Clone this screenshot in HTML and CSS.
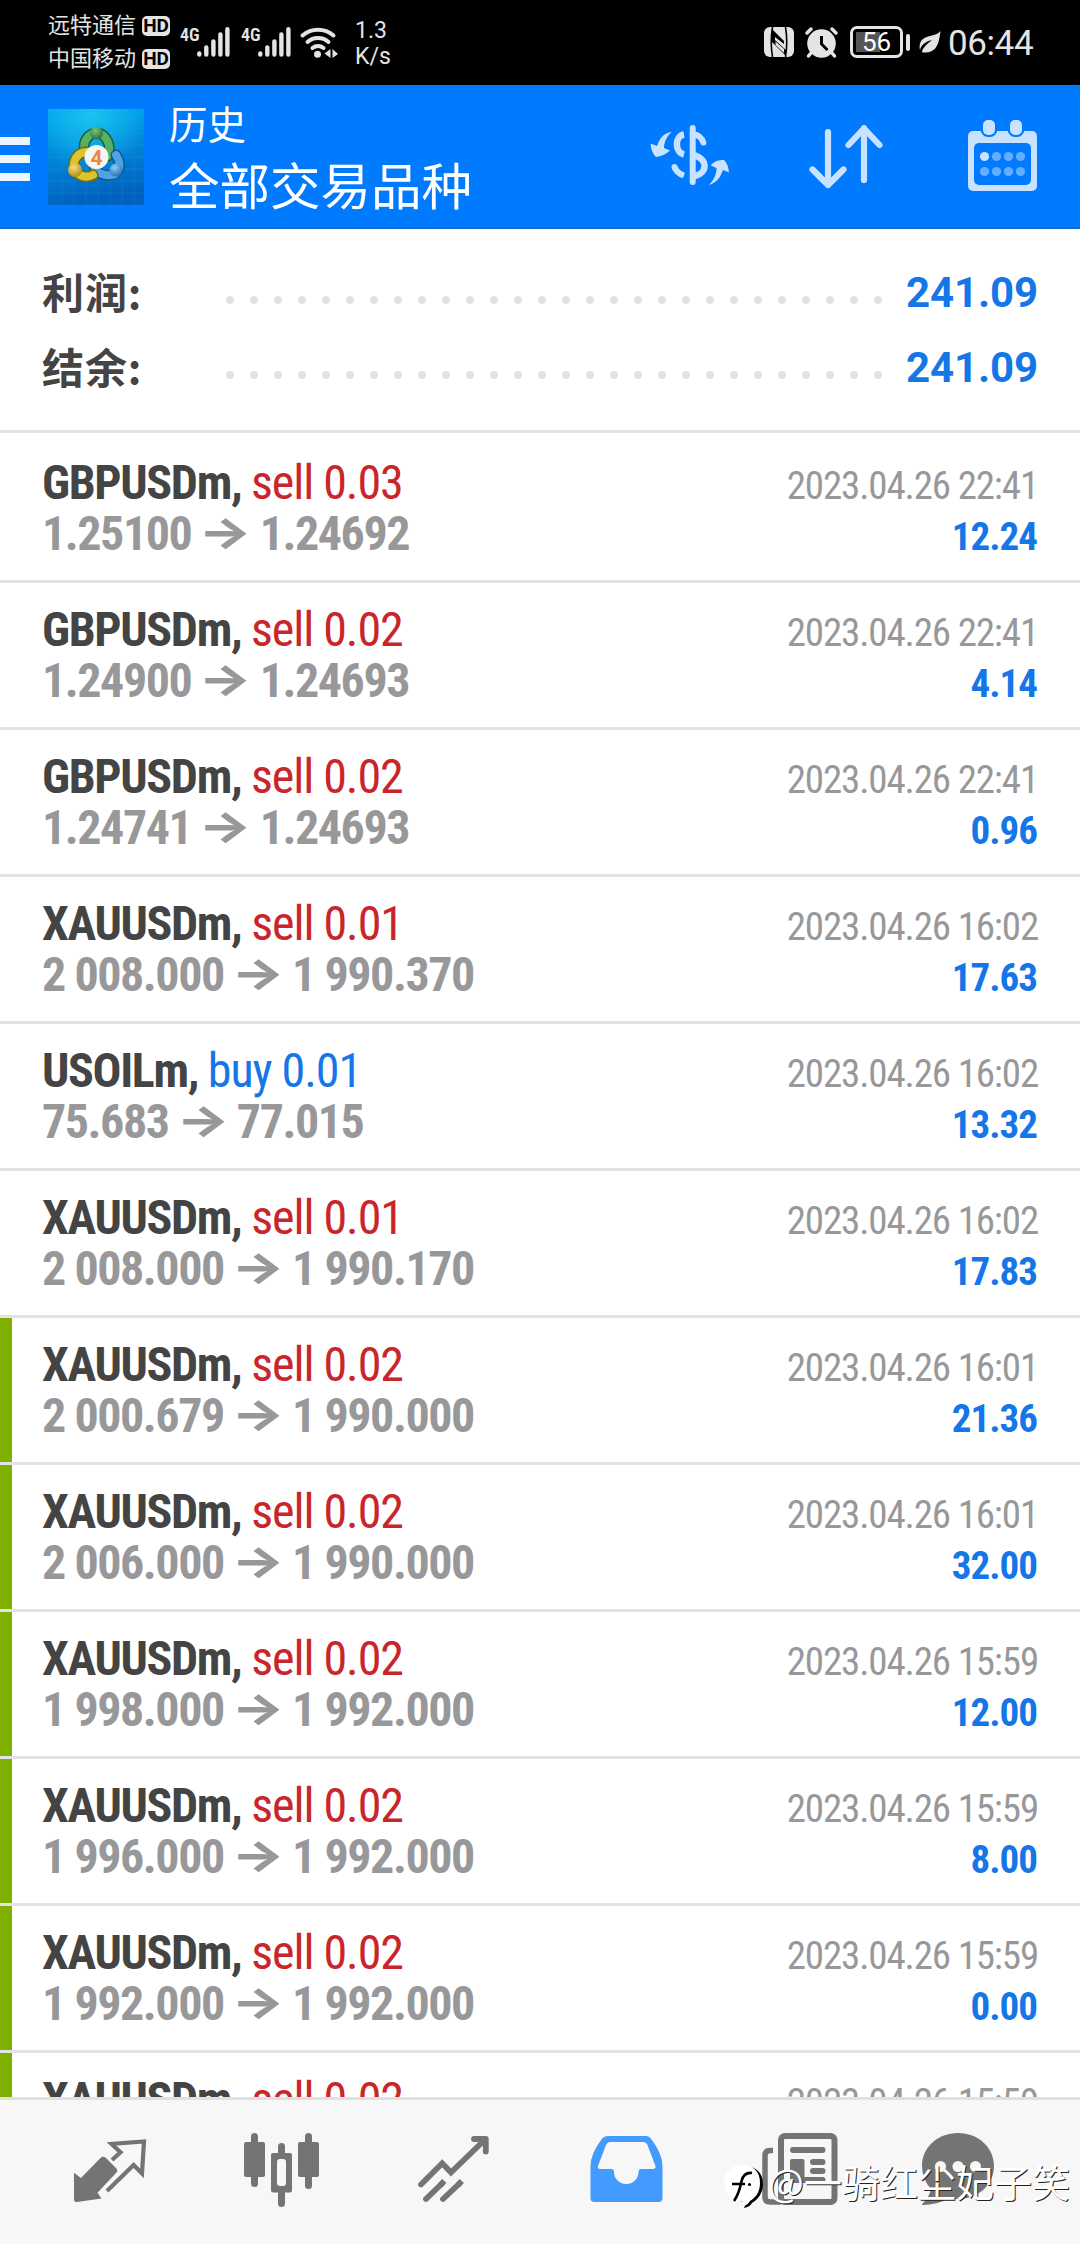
FILE: index.html
```html
<!DOCTYPE html>
<html lang="zh-CN">
<head>
    <meta charset="UTF-8">
    <meta name="viewport" content="width=device-width, initial-scale=1.0">
    <title>历史</title>
    <link rel="stylesheet" href="styles.css">
</head>
<body>
    <div class="status-bar">
        <div class="carriers">
            <div class="carrier">远特通信<span class="hd">HD</span></div>
            <div class="carrier">中国移动<span class="hd">HD</span></div>
        </div>
        <div class="signal">
            <span class="gen">4G</span>
            <svg width="33" height="30" viewBox="0 0 33 30" stroke="#e4e4e4" stroke-width="4.4" stroke-linecap="round"><path d="M2.3 26.5v1M9.3 20.5v7M16.4 14.5v13M23.4 7.5v20M30.4 2.3v25.2"/></svg>
        </div>
        <div class="signal">
            <span class="gen">4G</span>
            <svg width="33" height="30" viewBox="0 0 33 30" stroke="#e4e4e4" stroke-width="4.4" stroke-linecap="round"><path d="M2.3 26.5v1M9.3 20.5v7M16.4 14.5v13M23.4 7.5v20M30.4 2.3v25.2"/></svg>
        </div>
        <svg class="wifi" width="39" height="31" viewBox="0 0 39 31">
            <g fill="none" stroke="#e4e4e4" stroke-width="4" stroke-linecap="round"><path d="M2.5 8.5a24 24 0 0 1 31 0M7.5 15a16 16 0 0 1 21 0M12.5 21a9 9 0 0 1 11 0"/></g>
            <circle cx="17.5" cy="27.3" r="3.5" fill="#e4e4e4"/>
            <path d="M30.5 22v9l-6-4.5zM32.5 22v9l5.5-4z" fill="#e4e4e4"/>
        </svg>
        <div class="speed">1.3<br>K/s</div>
        <div class="status-right">
            <svg class="nfc" width="30" height="30" viewBox="0 0 30 30">
                <rect width="30" height="30" rx="6" fill="#e4e4e4"/>
                <path d="M8.5 0C7 9 7 21 8.5 30M21.5 0C23 9 23 21 21.5 30" fill="none" stroke="#000" stroke-width="1.6"/>
                <path d="M8 2L20 14V17L11 10V13L22 23V29L8 15z" fill="#000"/>
                <path d="M11.5 14.5L20 22V26L11.5 18z" fill="#e4e4e4"/>
            </svg>
            <svg class="alarm" width="33" height="31" viewBox="0 0 33 31">
                <circle cx="16.5" cy="16.5" r="14.3" fill="#e4e4e4"/>
                <path d="M2 6l4-4M31 6l-4-4M6 26l-2.5 3M27 26l2.5 3" stroke="#e4e4e4" stroke-width="3.5" stroke-linecap="round"/>
                <path d="M16.5 9v8l6 6" fill="none" stroke="#000" stroke-width="3"/>
            </svg>
            <div class="battery"><span>56</span></div>
            <svg class="leaf" width="22" height="22" viewBox="0 0 22 22">
                <path d="M21.5 0C20 12 18 21 7 21.5L3.5 21.5C2 20 5 15 13 9C5 11 2 15 1 19C-1 7 8 6 13 4.5C17 3.5 20 2 21.5 0z" fill="#e4e4e4"/>
            </svg>
            <div class="time">06:44</div>
        </div>
    </div>

    <header class="header">
        <div class="menu"><i></i><i></i><i></i></div>
        <svg class="logo" width="96" height="96" viewBox="0 0 96 96">
            <defs>
                <linearGradient id="sky" x1="0" y1="0" x2="0.2" y2="1"><stop offset="0" stop-color="#00a5f0"/><stop offset="0.5" stop-color="#0087d8"/><stop offset="1" stop-color="#0062be"/></linearGradient>
                <radialGradient id="glow" cx="0.45" cy="0.05" r="0.6"><stop offset="0" stop-color="#19c3f0"/><stop offset="1" stop-color="#19c3f0" stop-opacity="0"/></radialGradient>
                <radialGradient id="green" cx="0.4" cy="0.3" r="0.8"><stop offset="0" stop-color="#7cc47c"/><stop offset="1" stop-color="#176a3c"/></radialGradient>
                <radialGradient id="gold" cx="0.4" cy="0.3" r="0.8"><stop offset="0" stop-color="#f7e07a"/><stop offset="1" stop-color="#a58408"/></radialGradient>
                <radialGradient id="blue" cx="0.4" cy="0.3" r="0.8"><stop offset="0" stop-color="#8fd0f7"/><stop offset="1" stop-color="#1766ac"/></radialGradient>
            </defs>
            <rect width="96" height="96" fill="url(#sky)"/>
            <rect width="96" height="96" fill="url(#glow)"/>
            <path d="M14 0v96M26 0v96M38 0v96M50 0v96M62 0v96M74 0v96M86 0v96M0 12h96M0 24h96M0 36h96M0 48h96M0 60h96M0 72h96M0 84h96" stroke="#4cc4f4" stroke-opacity="0.12"/>
            <g fill="none" stroke-linecap="round">
                <path d="M37 42C34 32 41 24 49 24C58 25 64 36 60 47" stroke="#14623c" stroke-width="11"/>
                <path d="M37 42C34 32 41 24 49 24C58 25 64 36 60 47" stroke="#58b060" stroke-width="8"/>
                <path d="M68 46C75 56 70 66 63 66C56 67 50 64 47 60" stroke="#155494" stroke-width="11"/>
                <path d="M68 46C75 56 70 66 63 66C56 67 50 64 47 60" stroke="#4ca4e4" stroke-width="8"/>
                <path d="M38 43C28 44 24 53 27 61C31 68 39 69 45 66" stroke="#786810" stroke-width="11"/>
                <path d="M38 43C28 44 24 53 27 61C31 68 39 69 45 66" stroke="#dfc32c" stroke-width="8"/>
            </g>
            <circle cx="48.5" cy="24" r="6.5" fill="url(#green)"/>
            <circle cx="27" cy="61" r="7" fill="url(#gold)"/>
            <circle cx="68" cy="61" r="6.5" fill="url(#blue)"/>
            <circle cx="48.5" cy="48" r="12" fill="#f5f5f2"/>
            <text x="48.5" y="55.5" text-anchor="middle" class="logo-num">4</text>
        </svg>
        <div class="titles">
            <div class="title">历史</div>
            <div class="subtitle">全部交易品种</div>
        </div>
        <div class="actions">
            <svg width="80" height="72" viewBox="0 0 80 72">
                <g fill="none" stroke="#c8e2ff" stroke-width="6">
                    <path d="M43.7 9v54" stroke-linecap="round"/>
                    <path d="M35 15.5C25.5 17 25.5 33 35 35.5" stroke-width="6.5"/>
                    <path d="M43.7 15C50 16 53 19 54.3 23.5" stroke-linecap="round"/>
                    <path d="M43.7 36C59.5 39 59.5 55 43.7 57.5" stroke-width="6.5"/>
                    <path d="M25.5 48C27 52.5 30.5 55 35 56.5"/>
                    <path d="M25.5 48L25.6 48.3" stroke-linecap="round"/>
                </g>
                <g fill="#c8e2ff">
                    <path d="M22.7 13C14 14 10.5 20 8 27L1.7 24.5C1.7 30 4 35 7 38C12 37.5 17 35 21 31.5L15 29C15 23 18 17 22.7 13z"/>
                    <path d="M60 66C68 63.5 71.5 58 74 51L80 53.5C79.5 48 78 44 75 41C70 41 65 42 61.7 46.5L67.5 49C67.5 55 65 61 60 66z"/>
                </g>
            </svg>
            <svg width="80" height="72" viewBox="0 0 80 72" fill="none" stroke="#c8e2ff" stroke-width="6.2" stroke-linecap="round" stroke-linejoin="round">
                <path d="M22 13v53M6.5 50.500l15.500 15.500L37.500 50.500M58 61V9M42.500 26L58 9.500L73.500 26"/>
            </svg>
            <svg width="80" height="72" viewBox="0 0 80 72">
                <rect x="5" y="12" width="69" height="60" rx="5" fill="#c8e2ff"/>
                <rect x="11" y="24" width="57" height="42" rx="5" fill="#007aff"/>
                <rect x="17.5" y="-3" width="17" height="21" rx="7.5" fill="#007aff"/>
                <rect x="44.5" y="-3" width="17" height="21" rx="7.5" fill="#007aff"/>
                <rect x="20" y="1" width="12" height="15" rx="5" fill="#c8e2ff"/>
                <rect x="47" y="1" width="12" height="15" rx="5" fill="#c8e2ff"/>
                <circle cx="21.5" cy="37.5" r="4.6" fill="#c8e2ff"/>
                <g fill="#64aeff"><circle cx="33.5" cy="37.5" r="4.6"/><circle cx="45.5" cy="37.5" r="4.6"/><circle cx="57.5" cy="37.5" r="4.6"/><circle cx="21.5" cy="52.5" r="4.6"/><circle cx="33.5" cy="52.5" r="4.6"/><circle cx="45.5" cy="52.5" r="4.6"/><circle cx="57.5" cy="52.5" r="4.6"/></g>
            </svg>
        </div>
    </header>

    <div class="summary">
        <div class="summary-row"><span class="label">利润:</span><span class="dots"></span><span class="total">241.09</span></div>
        <div class="summary-row"><span class="label">结余:</span><span class="dots"></span><span class="total">241.09</span></div>
    </div>

    <div class="deals">
        <div class="deal">
            <div class="line"><span class="symbol">GBPUSDm, <span class="sell">sell 0.03</span></span><span class="date">2023.04.26 22:41</span></div>
            <div class="line"><span class="prices">1.25100 <span class="arrow">→</span> 1.24692</span><span class="profit">12.24</span></div>
        </div>
        <div class="deal">
            <div class="line"><span class="symbol">GBPUSDm, <span class="sell">sell 0.02</span></span><span class="date">2023.04.26 22:41</span></div>
            <div class="line"><span class="prices">1.24900 <span class="arrow">→</span> 1.24693</span><span class="profit">4.14</span></div>
        </div>
        <div class="deal">
            <div class="line"><span class="symbol">GBPUSDm, <span class="sell">sell 0.02</span></span><span class="date">2023.04.26 22:41</span></div>
            <div class="line"><span class="prices">1.24741 <span class="arrow">→</span> 1.24693</span><span class="profit">0.96</span></div>
        </div>
        <div class="deal">
            <div class="line"><span class="symbol">XAUUSDm, <span class="sell">sell 0.01</span></span><span class="date">2023.04.26 16:02</span></div>
            <div class="line"><span class="prices">2 008.000 <span class="arrow">→</span> 1 990.370</span><span class="profit">17.63</span></div>
        </div>
        <div class="deal">
            <div class="line"><span class="symbol">USOILm, <span class="buy">buy 0.01</span></span><span class="date">2023.04.26 16:02</span></div>
            <div class="line"><span class="prices">75.683 <span class="arrow">→</span> 77.015</span><span class="profit">13.32</span></div>
        </div>
        <div class="deal">
            <div class="line"><span class="symbol">XAUUSDm, <span class="sell">sell 0.01</span></span><span class="date">2023.04.26 16:02</span></div>
            <div class="line"><span class="prices">2 008.000 <span class="arrow">→</span> 1 990.170</span><span class="profit">17.83</span></div>
        </div>
        <div class="deal tp">
            <div class="line"><span class="symbol">XAUUSDm, <span class="sell">sell 0.02</span></span><span class="date">2023.04.26 16:01</span></div>
            <div class="line"><span class="prices">2 000.679 <span class="arrow">→</span> 1 990.000</span><span class="profit">21.36</span></div>
        </div>
        <div class="deal tp">
            <div class="line"><span class="symbol">XAUUSDm, <span class="sell">sell 0.02</span></span><span class="date">2023.04.26 16:01</span></div>
            <div class="line"><span class="prices">2 006.000 <span class="arrow">→</span> 1 990.000</span><span class="profit">32.00</span></div>
        </div>
        <div class="deal tp">
            <div class="line"><span class="symbol">XAUUSDm, <span class="sell">sell 0.02</span></span><span class="date">2023.04.26 15:59</span></div>
            <div class="line"><span class="prices">1 998.000 <span class="arrow">→</span> 1 992.000</span><span class="profit">12.00</span></div>
        </div>
        <div class="deal tp">
            <div class="line"><span class="symbol">XAUUSDm, <span class="sell">sell 0.02</span></span><span class="date">2023.04.26 15:59</span></div>
            <div class="line"><span class="prices">1 996.000 <span class="arrow">→</span> 1 992.000</span><span class="profit">8.00</span></div>
        </div>
        <div class="deal tp">
            <div class="line"><span class="symbol">XAUUSDm, <span class="sell">sell 0.02</span></span><span class="date">2023.04.26 15:59</span></div>
            <div class="line"><span class="prices">1 992.000 <span class="arrow">→</span> 1 992.000</span><span class="profit">0.00</span></div>
        </div>
        <div class="deal tp">
            <div class="line"><span class="symbol">XAUUSDm, <span class="sell">sell 0.02</span></span><span class="date">2023.04.26 15:59</span></div>
        </div>
    </div>

    <nav class="tabs">
        <svg viewBox="0 0 96 96">
            <path d="M12 48.7L19 54L38.5 34Q41.3 31.5 44 34L54.5 44.5Q56 46.5 54.5 48.5L35.5 68.7L39.5 74.5L15 78Q12 78.5 12 75z" fill="#747474"/>
            <path d="M50 36L58.5 28.3L49.5 20L82 17.5L80 49.5L71.6 41L45 67" fill="none" stroke="#747474" stroke-width="4.2"/>
        </svg>
        <svg viewBox="0 0 96 96" fill="#747474">
            <rect x="10" y="18" width="21" height="35" rx="2"/><rect x="17" y="9" width="7" height="54" rx="3.5"/>
            <rect x="64" y="18" width="21" height="35" rx="2"/><rect x="71" y="9" width="7" height="56" rx="3.5"/>
            <rect x="44" y="19" width="7" height="64" rx="3.5"/><rect x="37" y="29" width="21" height="39.5" rx="2"/>
            <rect x="43" y="35" width="9" height="27" rx="3" fill="#f7f7f7"/>
        </svg>
        <svg viewBox="0 0 96 96" fill="none" stroke="#747474" stroke-width="5.8" stroke-linecap="round">
            <path d="M15 60.5L36.2 39.3L45 48.5L79 15.5"/>
            <path d="M68 15H79.8V27.5" stroke-linejoin="round"/>
            <path d="M20 75L36 59.5M37 75L53.5 59.5"/>
            <path d="M34 61.5L38.3 57M51.5 61.5L55.8 57" stroke-linecap="butt"/>
        </svg>
        <svg viewBox="0 0 96 96">
            <path d="M30 12H68Q71.5 12 73.5 15.5Q84.5 30 84.5 42V74Q84.5 78 80.5 78H16.5Q12.5 78 12.5 74V42Q12.5 30 23.5 15.5Q25.5 12 30 12z" fill="#439bff"/>
            <path d="M32 18H65Q68 18 69.5 21L77.5 42Q78 45 75 45H63Q60.5 45 60.5 48A12.2 12 0 0 1 36 48Q36 45 33.5 45H22.5Q19 45 20 42L28 21Q29.5 18 32 18z" fill="#f7f7f7"/>
        </svg>
        <svg viewBox="0 0 96 96">
            <rect x="31" y="12" width="53.5" height="66" rx="4" fill="none" stroke="#747474" stroke-width="6"/>
            <path d="M23 26.5H20Q15 26.5 15 32V73Q15 78 20 78H31" fill="none" stroke="#747474" stroke-width="5.5"/>
            <path d="M43 26H72.5M63 38H72.5M63 47H72.5M43 56H72.5" stroke="#747474" stroke-width="6" stroke-linecap="round"/>
            <rect x="40" y="35" width="14.5" height="24" rx="2" fill="#747474"/>
        </svg>
        <svg viewBox="0 0 96 96">
            <path d="M36 9C56 9 72 23 72 42S56 75 36 75Q31 75 28 74Q15 81 1 81Q-1 81 1 79Q7 74 9 65Q0 55 0 42C0 23 16 9 36 9z" fill="#747474"/>
            <g fill="#f7f7f7"><circle cx="18.5" cy="42.5" r="5.5"/><circle cx="36" cy="42.5" r="5.5"/><circle cx="53.5" cy="42.5" r="5.5"/></g>
        </svg>
    </nav>

    <div class="watermark">
        <svg width="45" height="46" viewBox="0 0 45 46">
            <path d="M20 3C32 1 40 8 40 20C40 30 34 36 29 39Q27 43 21 44Q23 41 22 39L10 33z" fill="#000"/>
            <path d="M19 1C31 1 37 8 37 19C37 29 32 34 27 37Q25 41 20 42Q21 39 19 37C7 37 1 29 1 19S8 1 19 1z" fill="#fff"/>
            <path d="M29 9Q21 8 18.5 17Q16 30 11 37M9 20H22" fill="none" stroke="#000" stroke-width="2.6"/>
            <circle cx="26.5" cy="20.5" r="1.6"/>
        </svg>
        <span>@一骑红尘妃子笑</span>
    </div>
</body>
</html>
```
FILE: styles.css
```css
* {
    box-sizing: border-box;
}
body {
    position: relative;
    display: flex;
    flex-direction: column;
    width: 1080px;
    height: 2244px;
    margin: 0;
    overflow: hidden;
    background: #fff;
    font-family: Roboto, "Noto Sans CJK SC", sans-serif;
}
svg {
    display: block;
    flex-shrink: 0;
    overflow: visible;
}

/* phone status bar */
.status-bar {
    display: flex;
    align-items: flex-start;
    height: 85px;
    padding-left: 48px;
    background: #000;
    color: #e4e4e4;
}
.carriers {
    width: 132px;
    padding-top: 10px;
}
.carrier {
    display: flex;
    align-items: center;
    height: 33px;
    font-size: 22px;
    line-height: 28px;
    padding-bottom: 2px;
    white-space: nowrap;
}
.hd {
    width: 28px;
    height: 20px;
    margin: 1px 0 0 6px;
    border-radius: 5px;
    background: #e4e4e4;
    color: #000;
    font-size: 19px;
    font-weight: bold;
    line-height: 20px;
    text-align: center;
}
.signal {
    display: flex;
    width: 61px;
    padding-top: 27px;
}
.gen {
    width: 17px;
    font-family: "Roboto Condensed", Roboto, sans-serif;
    font-stretch: 75%;
    font-size: 18px;
    font-weight: 600;
    line-height: 15px;
}
.wifi {
    margin: 27px 16px 0 -2px;
}
.speed {
    padding-top: 18px;
    font-size: 23px;
    line-height: 26px;
}
.status-right {
    display: flex;
    align-items: center;
    margin-left: auto;
    padding: 26px 48px 0 0;
    height: 58px;
}
.alarm {
    margin: 0 12px 0 11px;
}
.battery {
    position: relative;
    width: 53px;
    height: 32px;
    padding: 3px;
    border: 3px solid #e4e4e4;
    border-radius: 7px;
    background: linear-gradient(#555, #555) 3px 3px / 24px 20px no-repeat;
    color: #fff;
    font-size: 26px;
    line-height: 21px;
    text-align: center;
}
.battery::after {
    content: "";
    position: absolute;
    top: 5px;
    right: -10px;
    width: 4px;
    height: 17px;
    border-radius: 2px;
    background: #e4e4e4;
}
.leaf {
    margin: 0 7px 0 16px;
}
.time {
    width: 84px;
    padding-top: 3px;
    font-size: 35px;
    letter-spacing: -0.4px;
    line-height: 32px;
    white-space: nowrap;
}

/* app header */
.header {
    display: flex;
    height: 144px;
    border-bottom: 2px solid #1268cc;
    background: #007aff;
    color: #fff;
}
.menu {
    display: flex;
    flex-direction: column;
    gap: 10px;
    width: 30px;
    padding-top: 52px;
}
.menu i {
    height: 8px;
    background: #eaf6ff;
}
.logo {
    margin: 24px 25px 0 18px;
}
.logo-num {
    fill: #ef8540;
    font-size: 21px;
    font-weight: bold;
}
.title {
    margin-top: 9px;
    font-family: "Noto Sans CJK SC", sans-serif;
    font-size: 38.5px;
    line-height: 56px;
}
.subtitle {
    font-family: "Noto Sans CJK SC", sans-serif;
    font-size: 50.5px;
    line-height: 66px;
}
.actions {
    display: flex;
    gap: 77px;
    margin-left: auto;
    padding: 34px 37px 0 0;
}

/* totals */
.summary {
    height: 204px;
    padding: 26px 42px 0;
    border-bottom: 3px solid #e3e3e5;
}
.summary-row {
    display: flex;
    align-items: center;
    height: 75px;
}
.label {
    width: 176px;
    margin-top: -5px;
    color: #444;
    font-family: "Noto Sans CJK SC", sans-serif;
    font-size: 42px;
    font-weight: bold;
    letter-spacing: 0.9px;
}
.dots {
    width: 672px;
    height: 10px;
    margin-top: 15px;
    background: radial-gradient(circle, #e2e2e2 3.5px, transparent 4.5px) 0 0 / 24px 10px;
}
.total {
    margin-left: auto;
    color: #1576e8;
    font-size: 42px;
    font-weight: bold;
    letter-spacing: -0.1px;
}

/* deal list */
.deals {
    flex: 1;
    min-height: 0;
    padding-top: 3px;
    overflow: hidden;
    font-family: "Roboto Condensed", Roboto, sans-serif;
    font-stretch: 75%;
}
.deal {
    height: 147px;
    padding: 21px 42px 0;
    border-bottom: 3px solid #e3e3e5;
}
.tp {
    box-shadow: inset 12px 0 0 #7fb000;
}
.line {
    display: flex;
    justify-content: space-between;
    align-items: baseline;
    height: 51px;
    line-height: 51px;
    white-space: nowrap;
}
.symbol,
.prices {
    color: #444;
    font-size: 48px;
    font-weight: bold;
    letter-spacing: -1.35px;
}
.prices {
    color: #98989a;
    letter-spacing: -1.45px;
}
.sell,
.buy {
    color: #c9252b;
    font-weight: normal;
    letter-spacing: -1.05px;
}
.buy {
    color: #1576e8;
}
.arrow {
    display: inline-block;
    margin: 0 4.5px;
    font-family: Inter, sans-serif;
    font-size: 42px;
    font-weight: 800;
    letter-spacing: 0;
    line-height: 1;
    transform: translateY(-3px) scaleX(1.34);
}
.date,
.profit {
    color: #98989a;
    font-size: 39px;
    letter-spacing: -1.15px;
}
.profit {
    margin-right: 1px;
    color: #1576e8;
    font-weight: bold;
    letter-spacing: -1px;
}

/* bottom tabs */
.tabs {
    display: grid;
    grid-template-columns: repeat(6, 172px);
    place-items: center;
    justify-content: center;
    height: 147px;
    border-top: 3px solid #e0e0e0;
    background: #f7f7f7;
}
.tabs svg {
    width: 96px;
    height: 96px;
}

.watermark {
    position: absolute;
    left: 723px;
    top: 2164px;
    display: flex;
    align-items: flex-start;
    color: #fff;
    font-family: "Noto Sans CJK SC", sans-serif;
    font-size: 38px;
    font-weight: 400;
    line-height: 34px;
    text-shadow: 1px 1px 0 #222;
    white-space: nowrap;
}
```
